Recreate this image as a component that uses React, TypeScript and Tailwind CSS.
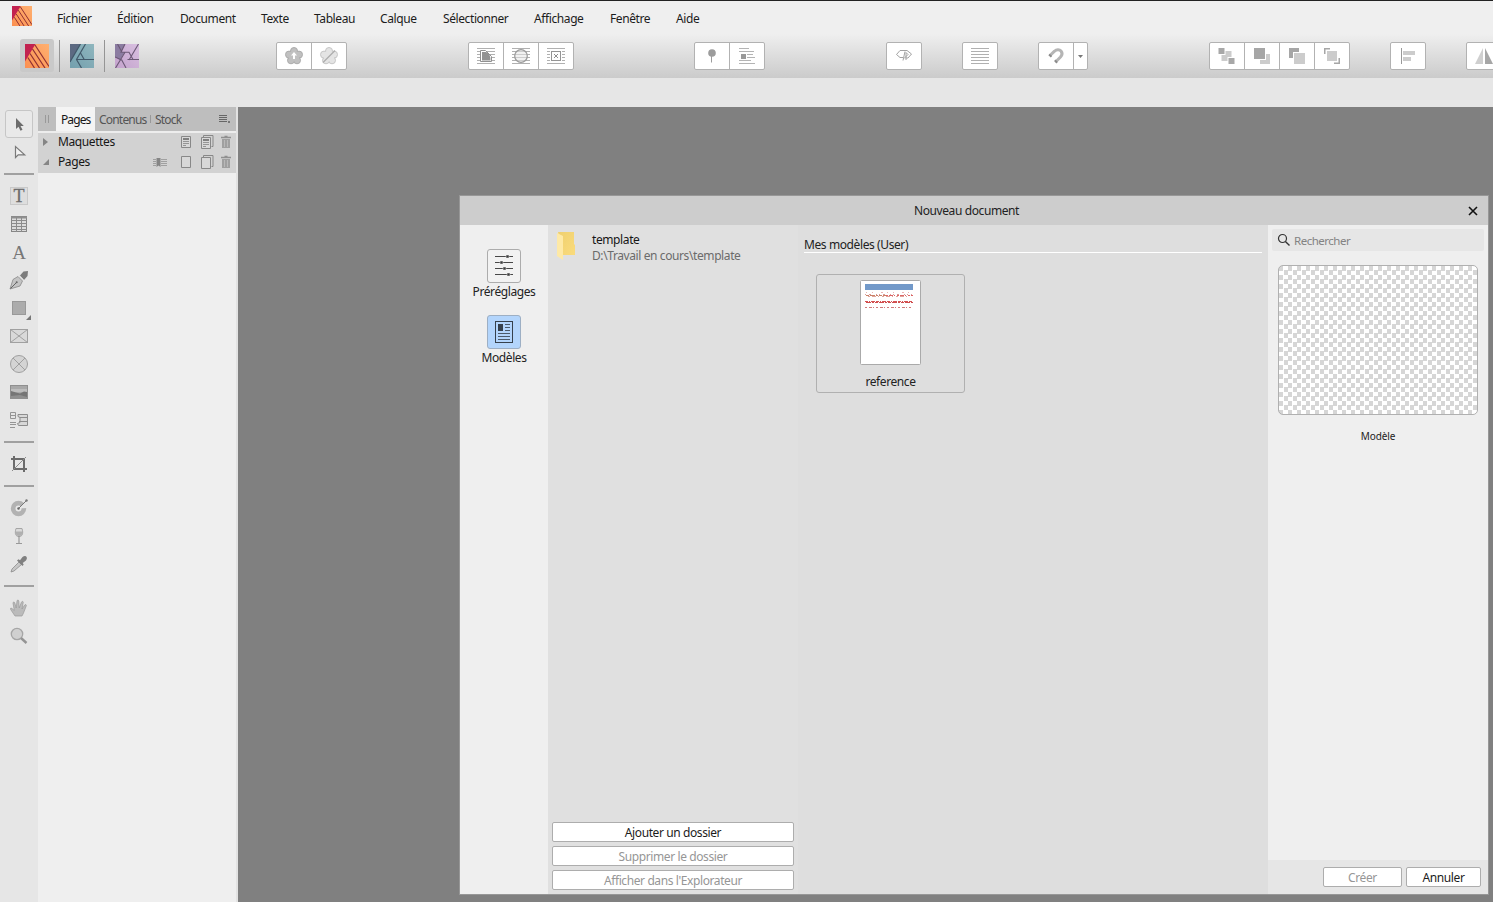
import React from 'react';
import { clsx } from 'clsx';

const menus = [
  { label: 'Fichier', width: 'w-[60px]' },
  { label: 'Édition', width: 'w-[63px]' },
  { label: 'Document', width: 'w-[81px]' },
  { label: 'Texte', width: 'w-[53px]' },
  { label: 'Tableau', width: 'w-[66px]' },
  { label: 'Calque', width: 'w-[63px]' },
  { label: 'Sélectionner', width: 'w-[91px]' },
  { label: 'Affichage', width: 'w-[76px]' },
  { label: 'Fenêtre', width: 'w-[66px]' },
  { label: 'Aide', width: 'w-[60px]' },
];

const PublisherLogo = ({ size }: { size: number }) => (
  <svg width={size} height={size} viewBox="0 0 24 24" className="shrink-0">
    <defs>
      <linearGradient id="pub" x1="1" y1="0" x2="0" y2="1">
        <stop offset="0" stopColor="#ffb070" />
        <stop offset="1" stopColor="#fb8f50" />
      </linearGradient>
    </defs>
    <rect width="24" height="24" fill="url(#pub)" />
    <path d="M0 0h10.5L0 17.5z" fill="#c2224f" />
    <path d="M10 1l14 21.5M7.5 5l12.5 19M5 9.5L14.5 24M2.8 13.5L9.5 24" stroke="#8f3033" strokeWidth="1.2" fill="none" />
  </svg>
);

const DesignerLogo = () => (
  <svg width="24" height="24" viewBox="0 0 24 24" className="shrink-0">
    <defs>
      <linearGradient id="des" x1="1" y1="0" x2="0" y2="1">
        <stop offset="0" stopColor="#8fb6be" />
        <stop offset="1" stopColor="#739fad" />
      </linearGradient>
    </defs>
    <rect width="24" height="24" fill="url(#des)" />
    <path d="M0 0h10.5L0 18z" fill="#5c6a82" />
    <path d="M10.5 0L0 18M15.5 0L6.5 15.5 11.5 24M6.5 15.5H24M10.5 9l3.7 6.5" stroke="#42596a" strokeWidth="1.2" fill="none" />
  </svg>
);

const PhotoLogo = () => (
  <svg width="24" height="24" viewBox="0 0 24 24" className="shrink-0">
    <defs>
      <linearGradient id="pho" x1="1" y1="0" x2="0" y2="1">
        <stop offset="0" stopColor="#d8bfe0" />
        <stop offset="1" stopColor="#c3a2cc" />
      </linearGradient>
    </defs>
    <rect width="24" height="24" fill="url(#pho)" />
    <path d="M0 0h10L6 8.3h3.5L5 16 0 13z" fill="#8b7ca1" />
    <path d="M10 0L6 8.3h8l4 7.200M2.500 0L7 8.300M23.500 0L14 16M12.500 15.500H24M10 8.300L0.500 24M0 13l6.500 3M6.500 15.500L11 24" stroke="#6b5875" strokeWidth="1.1" fill="none" />
  </svg>
);

/* Toolbar glyphs, drawn on a 20 x 20 grid */
const Glyph = ({ children }: { children: React.ReactNode }) => (
  <svg width="20" height="20" viewBox="0 0 20 20" fill="none" className="shrink-0">
    {children}
  </svg>
);

const Lines = () => (
  <path d="M1 2.5h18M1 5.5h18M1 8.5h18M1 11.5h18M1 14.5h18M1 17.5h18" stroke="#b0b0b0" />
);

const Petals = ({ fill, stroke }: { fill: string; stroke: string }) => (
  <>
    <g fill={fill} stroke={stroke}>
      <circle cx="10" cy="5" r="3.5" />
      <circle cx="15" cy="8.6" r="3.5" />
      <circle cx="13" cy="14.3" r="3.5" />
      <circle cx="7" cy="14.3" r="3.5" />
      <circle cx="5" cy="8.6" r="3.5" />
    </g>
    <circle cx="10" cy="10" r="5.5" fill={fill} />
  </>
);

const toolGroups = [
  {
    margin: '',
    icons: [
      <Glyph><Petals fill="#c0c0c0" stroke="#acacac" /><path d="M10 6l3 3.5h-2V13H9V9.500H7z" fill="#fff" /></Glyph>,
      <Glyph><Petals fill="#e4e4e4" stroke="#c6c6c6" /><path d="M4 16.500L16 4.500" stroke="#adadad" strokeWidth="1.2" /></Glyph>,
    ],
  },
  {
    margin: 'ml-[121px]',
    icons: [
      <Glyph><Lines /><path d="M4.5 4.5h5l6 6v5h-11z" fill="#fff" stroke="#909090" /><path d="M6 6h3.5c3 0 5 3 5 8.5H6z" fill="#929292" /></Glyph>,
      <Glyph><Lines /><circle cx="10" cy="10" r="6.3" fill="#e5e5e5" fillOpacity=".55" stroke="#999" strokeWidth="1.2" /></Glyph>,
      <Glyph><Lines /><rect x="4" y="4" width="12" height="12" fill="#fff" /><rect x="5.5" y="5.5" width="9" height="9" stroke="#959595" /><path d="M8 8l4 4m0-4l-4 4" stroke="#8e8e8e" /></Glyph>,
    ],
  },
  {
    margin: 'ml-[120px]',
    icons: [
      <Glyph><circle cx="10" cy="7" r="3.8" fill="#9c9c9c" /><path d="M9.500 10v6.500" stroke="#9c9c9c" /></Glyph>,
      <Glyph><path d="M2 2.500h10M2 5.500h15M10 8.500h6M10 11.500h8M2 14.500h12M2 17.500h16" stroke="#b4b4b4" /><path d="M4 8h5v5H4z" fill="#999" /></Glyph>,
    ],
  },
  {
    margin: 'ml-[121px]',
    icons: [
      <Glyph><path d="M9 11.5H6L2.500 8.500 6 4.500h7l4.500 3.500-3.500 4h-2.500M9 14.500l2-9M12 14V6.500l2 2-4 4" stroke="#a2a2a2" /></Glyph>,
    ],
  },
  {
    margin: 'ml-[40px]',
    icons: [
      <Glyph><Lines /></Glyph>,
    ],
  },
  {
    margin: 'ml-[40px]',
    dropdown: true,
    icons: [
      <Glyph><path d="M4 9.500l4.500-4.300c2-2 5-2 6.500-.2s1.300 4-.5 6L10 15.500" stroke="#b5b5b5" strokeWidth="3" /><path d="M3 8.500l2.500 2.300M8.800 14.300l2.300 2.500" stroke="#8c8c8c" strokeWidth="2" /></Glyph>,
    ],
  },
  {
    margin: 'ml-[121px]',
    icons: [
      <Glyph><path d="M8.500 5h6v6h-4v4h-6V9h4z" fill="#ccc" /><path d="M1.500 2h6v6h-6zM11.500 12h6v6h-6z" fill="#a8a8a8" /></Glyph>,
      <Glyph><path d="M8 8h10v10H8z" fill="#ccc" /><path d="M1 1h13v13H1z" fill="#fff" /><path d="M2 2h11v11H2z" fill="#a6a6a6" /></Glyph>,
      <Glyph><path d="M2 2h10v10H2z" fill="#a6a6a6" /><path d="M6 6h13v13H6z" fill="#fff" /><path d="M7 7h11v11H7z" fill="#ccc" /></Glyph>,
      <Glyph><path d="M2 2h6v6H2zM12 12h6v6h-6z" fill="#a6a6a6" /><path d="M3.500 3.500h13v13h-13z" fill="#fff" /><path d="M5 5h10v10H5z" fill="#ccc" /></Glyph>,
    ],
  },
  {
    margin: 'ml-[40px]',
    icons: [
      <Glyph><path d="M3.500 2v16" stroke="#999" /><path d="M5 5h12v4H5zM5 11h8v4H5z" fill="#ccc" /></Glyph>,
    ],
  },
  {
    margin: 'ml-[40px]',
    icons: [
      <Glyph><path d="M9 2v16H1z" fill="#cfcfcf" /><path d="M11 2v16h8z" fill="#a6a6a6" /></Glyph>,
    ],
  },
];

/* Tool palette glyphs, drawn on a 28 x 28 grid; null is a separator */
const tools: (React.ReactNode | null)[] = [
  <><rect x=".5" y=".5" width="27" height="27" rx="2.5" fill="#e9e9e9" stroke="#c6c6c6" /><path d="M11 8v11l2.500-2.300 2 4 2-.9-2-3.900h3.300z" fill="#6d6d6d" /></>,
  <path d="M10.500 8.500v11l2.700-2.700h6.500z" fill="#f2f2f2" stroke="#7a7a7a" strokeWidth="1.2" />,
  null,
  <><rect x="5.500" y="5.500" width="17" height="17" fill="#dedede" stroke="#c9c9c9" /><text x="14" y="20" textAnchor="middle" letterSpacing="0" fontFamily="Liberation Serif" fontSize="18" fill="#6c6c6c" stroke="#6c6c6c" strokeWidth=".3">T</text></>,
  <><rect x="6.500" y="6.500" width="15" height="15" fill="#dcdcdc" stroke="#868686" /><path d="M6 7.500h16" stroke="#909090" strokeWidth="2" /><path d="M6 10.500h16M6 13.500h16M6 16.500h16M6 19.500h16M11.500 6v16M16.500 6v16" stroke="#8c8c8c" /></>,
  <text x="14" y="20.500" textAnchor="middle" letterSpacing="0" fontFamily="Liberation Serif" fontSize="19" fill="#777">A</text>,
  <><path d="M5 23l3-9.500 5-3 4.500 4.500-2.500 5z" fill="#c4c4c4" stroke="#888" strokeWidth=".8" /><path d="M5.500 22.500l6-6" stroke="#666" /><circle cx="11.700" cy="16.300" r="1" fill="#666" /><path d="M15 9.500l3.500-4L23 5l-.5 5-3.500 4z" fill="#7c7c7c" /><path d="M14.500 9.500l4 4.300" stroke="#d5d5d5" /></>,
  <><rect x="7.500" y="7.500" width="13" height="13" fill="#acacac" stroke="#999" /><path d="M26 21v5h-5z" fill="#777" /></>,
  <><rect x="5.500" y="7.500" width="17" height="13" fill="#d9d9d9" stroke="#a0a0a0" /><path d="M5.500 7.500l17 13m0-13l-17 13" stroke="#a0a0a0" /></>,
  <><circle cx="14" cy="14" r="8.500" fill="#d4d4d4" stroke="#a0a0a0" /><path d="M8 8l12 12m0-12L8 20" stroke="#a0a0a0" /></>,
  <><rect x="5.500" y="7.500" width="17" height="13" fill="#a8a8a8" stroke="#8f8f8f" /><path d="M6 11h16v3H6z" fill="#bdbdbd" /><path d="M6 13l5 1.500 4 1 4-2 3 .5v6H6z" fill="#757575" /><path d="M6 18l9-1 7 2v1H6z" fill="#8f8f8f" /></>,
  <><path d="M5.500 6.500h5v6h-5zM5 9.500h6M5 16.500h6M5 18.500h6M5 21.500h5" stroke="#959595" fill="none" /><path d="M13 8.500h9.500v11h-9l-1-2 2.500-1v-5l-2-1z" fill="#d8d8d8" stroke="#8d8d8d" /><path d="M15 11.500h7M14 15.500h8" stroke="#8d8d8d" /></>,
  null,
  <><path d="M9 6v13h13M6 9h13v13" stroke="#6b6b6b" strokeWidth="2" fill="none" /><path d="M7 21L21 7" stroke="#8b8b8b" /></>,
  null,
  <><circle cx="13.500" cy="14.500" r="7.700" fill="#b2b2b2" /><path d="M13.500 14.500L19 9l3 1v4z" fill="#e6e6e6" /><circle cx="13.500" cy="14.500" r="3" fill="#e9e9e9" /><path d="M13.500 14.500l8-8" stroke="#777" /><circle cx="13.500" cy="14.500" r="1.200" fill="#666" /><circle cx="21.500" cy="6.500" r="1.200" fill="#777" /></>,
  <><path d="M11 6.500h6c1.500 5 .5 8-3 8s-4.500-3-3-8z" fill="#dadada" stroke="#a5a5a5" /><path d="M10.500 9.500h7c0 3-1 4.500-3.500 4.500s-3.500-1.500-3.500-4.500z" fill="#b0b0b0" /><path d="M14 14v7M11 21.500h6" stroke="#999" strokeWidth="1.2" /></>,
  <><path d="M6 22l1-3 7-7 2.500 2.500-7.500 6.500z" fill="#c7c7c7" stroke="#8b8b8b" strokeWidth=".8" /><path d="M12 10.500l1.500-1.200 1.500 1 2.500-3.300c3-2.500 6 .5 3.500 3.500l-3.300 2.500 1 1.500-1.200 1.500z" fill="#808080" /></>,
  null,
  <path d="M10 22l-4-6c-1-1.500-.5-2.500 1-1.500l2.300 2L8 9c0-1.300 1.500-1.300 1.800 0l1.400 5L12 7c0-1.200 1.700-1.200 1.800 0l.4 7L16.500 8c.5-1 2-.7 1.700.5L17 15l2.700-4c1-1 2-.2 1.500 1L18.500 19l-1.500 3z" fill="#bbb" stroke="#999" strokeWidth=".7" />,
  <><circle cx="12" cy="12" r="5.700" fill="#d0d0d0" stroke="#a6a6a6" strokeWidth="1.3" /><path d="M16 16l5.500 5" stroke="#949494" strokeWidth="2.4" /></>,
];

const Trash = () => (
  <svg width="10" height="14" viewBox="0 0 10 14" fill="none">
    <path d="M0 2.500h10M3.500 1.500h3" stroke="#909090" strokeWidth="1.5" />
    <path d="M1 4h8v9H1z" fill="#a0a0a0" />
    <path d="M3.500 5v7M6.500 5v7" stroke="#b9b9b9" />
  </svg>
);

const PageIcon = ({ stacked, lined }: { stacked?: boolean; lined?: boolean }) => (
  <svg width={stacked ? 13 : 11} height="14" viewBox={stacked ? '0 0 13 14' : '0 0 11 14'} fill="none">
    {stacked && <path d="M2.500 2V.5h9.500V11.500h-1.500" stroke="#888" />}
    <path d={stacked ? 'M.5 2.500h9v11h-9z' : 'M.5 1.500h9v11h-9z'} stroke="#888" fill="#d8d8d8" />
    {lined && <path d={stacked ? 'M2 5h6' : 'M2 4h6'} stroke="#808080" strokeWidth="2" />}
    {lined && <path d={stacked ? 'M2 7.500h6M2 9.500h6M2 11.500h3' : 'M2 6.500h6M2 8.500h6M2 10.500h3'} stroke="#959595" />}
  </svg>
);

const ToolPalette = () => (
  <aside className="w-[38px] shrink-0 flex flex-col items-center pt-[3px] bg-[#e6e6e6]">
    {tools.map((tool, i) =>
      tool ? (
        <svg key={i} width="28" height="28" viewBox="0 0 28 28" className="shrink-0">{tool}</svg>
      ) : (
        <div key={i} className="h-4 w-[30px] shrink-0 flex items-center">
          <div className="h-[2px] w-full bg-[#a0a0a0]" />
        </div>
      )
    )}
  </aside>
);

const PagesPanel = () => (
  <section className="w-[200px] shrink-0 bg-[#efefef] border-r-2 border-[#e2e2e2]">
    <div className="h-6 flex items-center bg-[#bebebe] text-[#555]">
      <div className="w-[18px] h-2 shrink-0 flex gap-[2px] pl-[7px]">
        <i className="w-px h-full bg-[#999]" />
        <i className="w-px h-full bg-[#999]" />
      </div>
      <div className="w-[39px] h-full shrink-0 pl-[5px] pt-px leading-6 bg-[#f4f4f4] text-[#161616] tracking-[-0.9px]">Pages</div>
      <div className="w-[55px] shrink-0 pl-1 pt-px tracking-[-0.8px]">Contenus</div>
      <div className="w-px h-2 shrink-0 bg-[#989898]" />
      <div className="pl-1 pt-px tracking-[-0.8px]">Stock</div>
      <svg className="ml-auto mr-[4px]" width="14" height="10" viewBox="0 0 14 10">
        <path d="M1 1.500h8M1 3.500h8M1 5.500h8M1 7.500h8" stroke="#666" />
        <path d="M10 7h2v2h-2z" fill="#777" />
      </svg>
    </div>
    <div className="h-[42px] bg-[#d2d2d2] border-t-2 border-[#ededed] text-[#161616]">
      <div className="h-[18px] flex items-center">
        <svg className="ml-[5px]" width="6" height="10"><path d="M0 1v8l5-4z" fill="#858585" /></svg>
        <span className="ml-[9px] w-[85px]">Maquettes</span>
        <div className="ml-[38px]"><PageIcon lined /></div>
        <div className="ml-[9px]"><PageIcon stacked lined /></div>
        <div className="ml-[7px]"><Trash /></div>
      </div>
      <div className="h-[22px] flex items-center">
        <svg className="ml-[5px]" width="7" height="8"><path d="M6 1v6H0z" fill="#858585" /></svg>
        <span className="ml-[8px] w-[57px]">Pages</span>
        <svg className="ml-[38px]" width="14" height="12" viewBox="0 0 14 12">
          <path d="M0 3.500h3M0 5.500h3M0 7.500h3M0 9.500h3M8 3.500h6M8 5.500h6M8 7.500h6M8 9.500h6" stroke="#a0a0a0" />
          <path d="M3.500 2h4v9l-2-1.500-2 1.500z" fill="#858585" />
        </svg>
        <div className="ml-[14px]"><PageIcon /></div>
        <div className="ml-[9px]"><PageIcon stacked /></div>
        <div className="ml-[7px]"><Trash /></div>
      </div>
    </div>
  </section>
);

const DialogButton = ({ label, disabled, className }: { label: string; disabled?: boolean; className: string }) => (
  <button
    className={clsx(
      'h-5 pt-0.5 rounded-[2px] border border-[#adadad] bg-white flex items-center justify-center',
      disabled ? 'text-[#969696]' : 'text-[#1c1c1c]',
      className
    )}
  >
    {label}
  </button>
);

const TemplateThumb = () => (
  <svg className="mt-[5px]" width="61" height="86" viewBox="0 0 61 86" fill="none">
    <rect x=".5" y=".5" width="60" height="84" rx="1" fill="#fff" stroke="#aaa" />
    <path d="M5 4h48v6H5z" fill="#7299c9" />
    <path d="M6 12.500h46" stroke="#e9b5b5" strokeDasharray="1 5 1 8 2 4" />
    <path d="M5 14.500h47" stroke="#dd9a9a" strokeDasharray="1 3 2 5 1 2" />
    <path d="M6 15.500h22" stroke="#c98266" strokeDasharray="3 1 5 1 2 1" />
    <path d="M26 15.500h27" stroke="#d66" strokeDasharray="2 1 4 1 1 2" />
    <path d="M8 16.500h40" stroke="#e0a39a" strokeDasharray="2 2 4 2 1 3" />
    <path d="M5 21.500h47" stroke="#d55252" strokeDasharray="3 1 1 1 4 1" />
    <path d="M6 22.500h47" stroke="#cf4c4c" strokeDasharray="5 1 2 1 3 1" />
    <path d="M5 27.500h48" stroke="#d07a7a" strokeDasharray="2 2 3 1 1 2" />
  </svg>
);

const NewDocumentDialog = () => (
  <div className="ml-[221px] mt-[88px] w-[1030px] h-[700px] flex flex-col border border-[#979797] bg-[#dedede] text-[#222]">
    <header className="h-[29px] shrink-0 bg-[#cdcdcd] flex items-center">
      <h1 className="flex-1 pl-[5px] text-center">Nouveau document</h1>
      <svg className="mr-[10px]" width="10" height="10" viewBox="0 0 10 10"><path d="M1 1l8 8M9 1L1 9" stroke="#111" strokeWidth="1.6" /></svg>
    </header>
    <div className="flex-1 min-h-0 flex">
      <nav className="w-[88px] shrink-0 bg-[#efefef] pt-6 flex flex-col items-center">
        <button className="size-[34px] rounded-[3px] border border-[#acacac] bg-[#f2f2f2] flex items-center justify-center">
          <svg width="20" height="24" viewBox="0 0 20 24" fill="none">
            <path d="M1 2.500h18M1 8.500h18M1 14.500h18M1 20.500h18" stroke="#484848" />
            <path d="M12 1h3v3h-3zM6 7h3v3H6zM9 13h3v3H9zM13 19h3v3h-3z" fill="#3b3b3b" stroke="#f2f2f2" strokeWidth=".5" />
          </svg>
        </button>
        <span className="h-4 mt-[1px] leading-4">Préréglages</span>
        <button className="mt-[15px] size-[34px] rounded-[3px] border border-[#9dafc4] bg-[#b3d5fc] flex items-center justify-center">
          <svg width="18" height="22" viewBox="0 0 18 22" fill="none">
            <rect x=".5" y=".5" width="17" height="21" stroke="#36414d" />
            <path d="M3 3h5v7H3z" fill="#36414d" />
            <path d="M10 3.500h5M10 6.500h5M10 9.500h5M3 12.500h12M3 15.500h12M3 18.500h12" stroke="#4c5b6c" />
          </svg>
        </button>
        <span className="h-4 mt-[1px] leading-4">Modèles</span>
      </nav>

      <section className="w-[250px] shrink-0 flex flex-col bg-[#e0e0e0] px-1 pb-1">
        <div className="flex pt-[7px] pl-1">
          <svg width="22" height="28" viewBox="0 0 22 28">
            <defs>
              <linearGradient id="fold" x1="0" y1="0" x2="1" y2="1">
                <stop offset="0" stopColor="#efd06f" />
                <stop offset="1" stopColor="#fadb7c" />
              </linearGradient>
            </defs>
            <path d="M2 0h16v12l1 1v10H7z" fill="url(#fold)" />
            <path d="M1 1l6 3v24l-6-4z" fill="#fee9a6" />
          </svg>
          <div className="ml-[14px] leading-4">
            <div className="text-[#161616]">template</div>
            <div className="text-[#6b6b6b]">D:\Travail en cours\template</div>
          </div>
        </div>
        <div className="mt-auto flex flex-col gap-1">
          <DialogButton label="Ajouter un dossier" className="w-full" />
          <DialogButton label="Supprimer le dossier" disabled className="w-full" />
          <DialogButton label="Afficher dans l'Explorateur" disabled className="w-full" />
        </div>
      </section>

      <main className="w-[470px] shrink-0 px-[6px] pt-3">
        <h2 className="h-4 leading-4 border-b border-white">Mes modèles (User)</h2>
        <div className="mt-[21px] ml-3 w-[149px] h-[119px] rounded-[3px] border border-[#b0b0b0] flex flex-col items-center">
          <TemplateThumb />
          <span className="mt-2 leading-4">reference</span>
        </div>
      </main>

      <aside className="w-[220px] shrink-0 flex flex-col bg-[#efefef]">
        <div className="mt-1 mx-1 h-[22px] rounded-[2px] bg-[#e6e6e6] flex items-center text-[11.5px] text-[#838383]">
          <svg className="ml-[5px]" width="14" height="14" viewBox="0 0 14 14" fill="none">
            <circle cx="5.500" cy="5.500" r="4" stroke="#333" strokeWidth="1.2" />
            <path d="M8.400 8.400l4.100 4" stroke="#333" strokeWidth="1.4" />
          </svg>
          <span className="ml-[3px] pt-px tracking-[-0.5px]">Rechercher</span>
        </div>
        <div className="mt-[14px] ml-[10px] w-[200px] h-[150px] rounded-[5px] border border-[#b0b0b0] bg-[repeating-conic-gradient(#fff_0_25%,#d6d6d6_0_50%)] bg-[length:9px_9px]" />
        <div className="mt-[13px] text-center text-[10px] tracking-[-0.1px] leading-4 text-[#222]">Modèle</div>
        <footer className="mt-auto h-[34px] bg-[#e6e6e6] flex justify-end gap-1 pt-[7px] pr-[7px]">
          <DialogButton label="Créer" disabled className="w-[79px]" />
          <DialogButton label="Annuler" className="w-[75px]" />
        </footer>
      </aside>
    </div>
  </div>
);

const App: React.FC = () => {
  return (
    <div className="w-[1493px] h-[902px] flex flex-col overflow-hidden border-t border-[#222] bg-[#e6e6e6] font-['Noto_Sans','Open_Sans',sans-serif] text-[12px] tracking-[-0.4px] text-[#1c1c1c] cursor-default select-none">
      <header className="h-[33px] shrink-0 bg-[#efefef] flex">
        <div className="w-[57px] pl-3 pt-[5px]"><PublisherLogo size={20} /></div>
        {menus.map((menu) => (
          <div key={menu.label} className={clsx('pt-[9px] leading-[18px] whitespace-nowrap', menu.width)}>{menu.label}</div>
        ))}
      </header>

      <div className="h-11 shrink-0 overflow-hidden flex items-start pl-5 bg-linear-to-b from-[#efefef] to-[#cbcbcb]">
        <div className="mt-[5px] w-[34px] h-[33px] shrink-0 rounded-[3px] bg-[#c9c9c9] flex items-center justify-center"><PublisherLogo size={24} /></div>
        <div className="mt-[6px] ml-[5px] w-px h-8 shrink-0 bg-[#959595]" />
        <div className="mt-[10px] ml-[10px] shrink-0"><DesignerLogo /></div>
        <div className="mt-[6px] ml-[10px] w-px h-8 shrink-0 bg-[#959595]" />
        <div className="mt-[10px] ml-[10px] mr-[137px] shrink-0"><PhotoLogo /></div>
        {toolGroups.map((group, i) => (
          <div key={i} className={clsx('mt-2 h-7 shrink-0 flex rounded-[2px] border border-[#b2b2b2] bg-white divide-x divide-[#b2b2b2]', group.margin)}>
            {group.icons.map((icon, j) => (
              <div key={j} className={clsx('flex items-center justify-center', j < group.icons.length - 1 || group.dropdown ? 'w-[35px]' : 'w-[34px]')}>{icon}</div>
            ))}
            {group.dropdown && (
              <div className="w-[13px] flex items-center justify-center">
                <svg width="5" height="3"><path d="M0 0h5L2.500 3z" fill="#777" /></svg>
              </div>
            )}
          </div>
        ))}
      </div>

      <div className="h-[29px] shrink-0 bg-[#e6e6e6]" />

      <div className="flex-1 min-h-0 flex">
        <ToolPalette />
        <PagesPanel />
        <div className="flex-1 min-w-0 bg-[#808080]">
          <NewDocumentDialog />
        </div>
      </div>
    </div>
  );
};

export default App;
